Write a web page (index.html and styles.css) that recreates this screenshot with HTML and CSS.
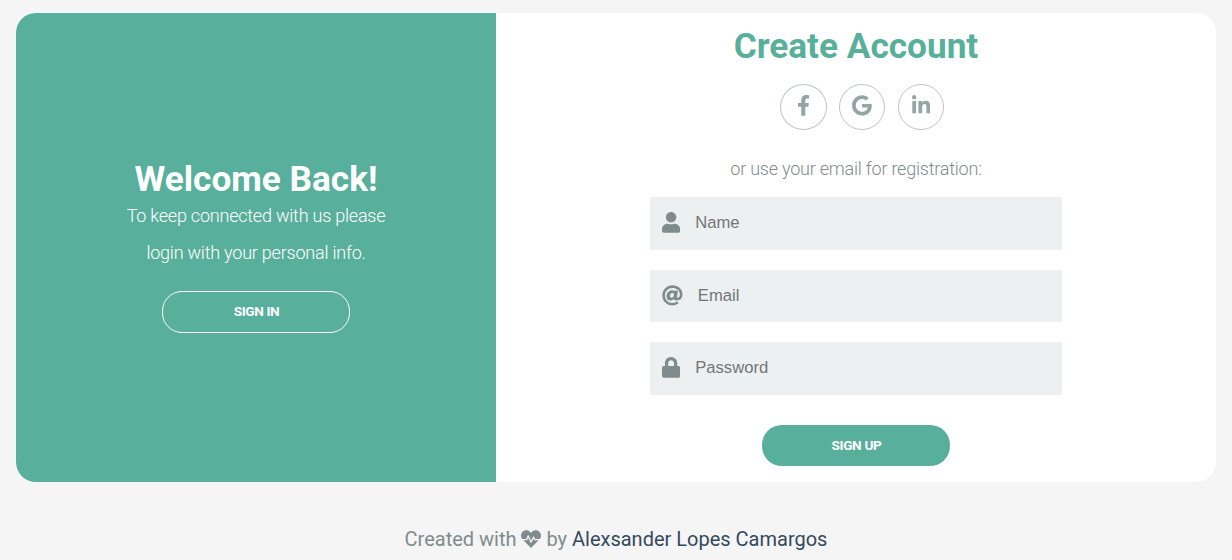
FILE: index.html
```html
<!DOCTYPE html>
<html lang="en">
<head>
<meta charset="utf-8">
<title>Create Account</title>
<link rel="stylesheet" href="styles.css">
</head>
<body>
<main class="card">
  <section class="welcome">
    <h2 class="title title-light">Welcome Back!</h2>
    <p class="description description-light">To keep connected with us please</p>
    <p class="description description-light">login with your personal info.</p>
    <button class="btn btn-outline" type="button">SIGN IN</button>
  </section>
  <section class="register">
    <h2 class="title title-accent">Create Account</h2>
    <ul class="social">
      <li class="social-item social-item-wide"><svg class="icon" viewBox="0 0 320 512" width="13" height="20.8"><path d="M279.14 288l14.22-92.66h-88.91v-60.13c0-25.35 12.42-50.06 52.24-50.06h40.42V6.26S260.43 0 225.36 0c-73.22 0-121.08 44.38-121.08 124.72v70.62H22.89V288h81.39v224h100.17V288z"/></svg></li>
      <li class="social-item"><svg class="icon" viewBox="0 0 488 512" width="19.8" height="20.8"><path d="M488 261.8C488 403.3 391.1 504 248 504 110.8 504 0 393.2 0 256S110.8 8 248 8c66.8 0 123 24.5 166.3 64.9l-67.5 64.9C258.5 52.6 94.3 116.6 94.3 256c0 86.5 69.1 156.6 153.7 156.6 98.2 0 135-70.4 140.8-106.9H248v-85.3h236.1c2.3 12.7 3.9 24.9 3.9 41.4z"/></svg></li>
      <li class="social-item"><svg class="icon" viewBox="0 0 448 512" width="18.2" height="20.8"><path d="M100.28 448H7.4V148.9h92.88zM53.79 108.1C24.09 108.1 0 83.5 0 53.8a53.79 53.79 0 0 1 107.58 0c0 29.7-24.1 54.3-53.79 54.3zM447.9 448h-92.68V302.4c0-34.7-.7-79.2-48.29-79.2-48.29 0-55.69 37.7-55.69 76.7V448h-92.78V148.9h89.08v40.8h1.3c12.4-23.5 42.69-48.3 87.88-48.3 94 0 111.28 61.9 111.28 142.3V448z"/></svg></li>
    </ul>
    <p class="description description-muted">or use your email for registration:</p>
    <form class="form">
      <label class="field"><svg class="icon" viewBox="0 0 448 512" width="18.2" height="20.8"><path d="M224 256c70.7 0 128-57.3 128-128S294.7 0 224 0 96 57.3 96 128s57.3 128 128 128zm89.6 32h-16.7c-22.2 10.2-46.9 16-72.9 16s-50.6-5.8-72.9-16h-16.7C60.2 288 0 348.2 0 422.4V464c0 26.5 21.5 48 48 48h352c26.5 0 48-21.5 48-48v-41.6c0-74.2-60.2-134.4-134.4-134.4z"/></svg><input class="input" type="text" placeholder="Name"></label>
      <label class="field"><svg class="icon" viewBox="0 0 512 512" width="20.8" height="20.8"><path d="M256 8C118.941 8 8 118.919 8 256c0 137.059 110.919 248 248 248 48.154 0 95.342-14.14 135.408-40.223 12.005-7.815 14.625-24.288 5.552-35.372l-10.177-12.433c-7.671-9.371-21.179-11.667-31.373-5.129C325.92 429.757 291.314 440 256 440c-101.458 0-184-82.542-184-184S154.542 72 256 72c100.139 0 184 57.619 184 160 0 38.786-21.093 79.742-58.17 83.693-17.349-.454-16.91-12.857-13.476-30.024l23.433-121.11C394.653 149.75 383.308 136 368.225 136h-44.981a13.518 13.518 0 0 0-13.432 11.993l-.01.092c-14.697-17.901-40.448-21.775-59.971-21.775-74.58 0-137.831 62.234-137.831 151.46 0 65.303 36.785 105.87 96 105.87 26.984 0 57.369-15.637 74.991-38.333 9.522 34.104 40.613 34.104 70.671 34.104C462.609 379.41 504 307.798 504 232 504 95.653 394.023 8 256 8zm-21.68 304.43c-22.249 0-36.07-15.623-36.07-40.771 0-44.993 30.779-72.729 58.63-72.729 22.292 0 35.601 15.241 35.601 40.77 0 45.061-33.875 72.73-58.161 72.73z"/></svg><input class="input" type="email" placeholder="Email"></label>
      <label class="field"><svg class="icon" viewBox="0 0 448 512" width="18.2" height="20.8"><path d="M400 224h-24v-72C376 68.2 307.8 0 224 0S72 68.2 72 152v72H48c-26.5 0-48 21.5-48 48v192c0 26.5 21.5 48 48 48h352c26.5 0 48-21.5 48-48V272c0-26.5-21.5-48-48-48zm-104 0H152v-72c0-39.7 32.3-72 72-72s72 32.3 72 72v72z"/></svg><input class="input" type="password" placeholder="Password"></label>
      <button class="btn btn-solid" type="button">SIGN UP</button>
    </form>
  </section>
</main>
<footer class="footer">Created with <svg class="icon heart" viewBox="0 0 512 512" width="20" height="20"><path d="M320.2 243.8l-49.7 99.4c-6 12.1-23.4 11.7-28.9-.6l-56.9-126.3-30 71.7H60.6l182.5 186.5c7.1 7.3 18.6 7.3 25.7 0L451.4 288H342.3l-22.1-44.2zM473.7 73.9l-2.4-2.5c-51.5-52.6-135.8-52.6-187.4 0L256 100l-27.9-28.5c-51.5-52.7-135.9-52.7-187.4 0l-2.4 2.4C-10.4 123.7-12.5 203 31 256h102.4l35.9-86.2c5.4-12.9 23.6-13.2 29.4-.4l58.2 129.3 49-97.9c5.9-11.8 22.7-11.8 28.6 0l27.6 55.2H481c43.5-53 41.4-132.3-7.3-182.1z"/></svg> by <a class="author">Alexsander Lopes Camargos</a></footer>
</body>
</html>
```
FILE: styles.css
```css
* { box-sizing: border-box; margin: 0; padding: 0; }
body {
  height: 560px;
  padding: 13px 16px 0;
  overflow: hidden;
  background: #f5f5f5;
  font-family: Roboto, sans-serif;
}
.card {
  display: flex;
  height: 469px;
  border-radius: 20px;
  overflow: hidden;
  background: #fff;
}
.welcome {
  display: flex;
  flex-direction: column;
  align-items: center;
  width: 480px;
  padding-top: 145px;
  background: #58af9b;
}
.register {
  display: flex;
  flex: 1;
  flex-direction: column;
  align-items: center;
  padding-top: 12px;
}
.title { font-size: 35.2px; font-weight: 700; line-height: 42px; }
.title-light { color: #fff; }
.title-accent { color: #58af9b; }
.description { font-size: 18px; font-weight: 300; line-height: 37px; letter-spacing: -0.22px; }
.description-light { color: #fff; position: relative; top: -3px; }
.description-muted { color: #7f8c8d; }
.btn {
  width: 188px;
  height: 42px;
  padding: 0 0 2px 1px;
  border: 1px solid #fff;
  border-radius: 20px;
  color: #fff;
  font: 700 13.6px Roboto, sans-serif;
  letter-spacing: -0.35px;
}
.btn-outline { margin-top: 17px; background: transparent; }
.btn-solid { height: 41px; margin-top: 10px; padding-bottom: 1px; border: 0; background: #58af9b; }
.icon { display: block; flex: none; fill: #7f8c8d; }
.social {
  display: flex;
  gap: 12.5px;
  margin: 17px 0 20px 12px;
  list-style: none;
}
.social-item {
  display: flex;
  justify-content: center;
  width: 46px;
  height: 46px;
  padding-top: 10.4px;
  border: 1px solid #bdc3c7;
  border-radius: 50%;
}
.social-item-wide { width: 47px; margin-right: -0.5px; }
.social-item .icon { fill: #95a5a6; }
.form {
  display: flex;
  flex-direction: column;
  align-items: center;
  gap: 20px;
  margin-top: 10px;
}
.field {
  display: flex;
  align-items: center;
  gap: 15px;
  width: 412px;
  height: 52.5px;
  padding-left: 12px;
  background: #ecf0f1;
}
.field .icon { margin-bottom: 1px; }
.input {
  flex: 1;
  min-width: 0;
  height: 50px;
  border: 0;
  outline: 0;
  background: transparent;
  font: 16.64px "Liberation Sans", Arial, sans-serif;
}
.input::placeholder { color: #757575; }
.footer {
  margin-top: 45px;
  color: #7f8c8d;
  font-size: 20px;
  line-height: 24px;
  text-align: center;
}
.heart { display: inline-block; vertical-align: -3px; }
.author { color: #34495e; }
```
